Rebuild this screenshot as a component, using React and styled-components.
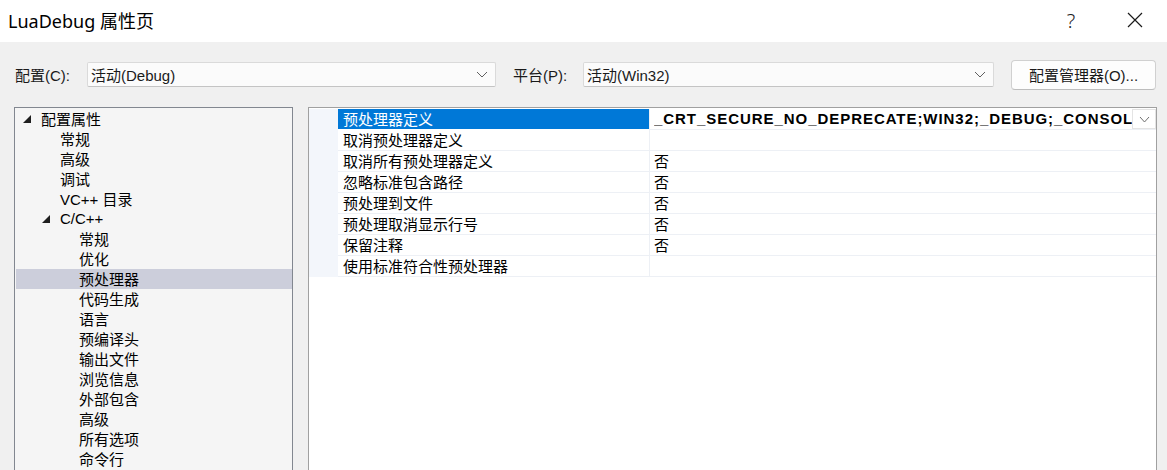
import React from "react";
import styled, { createGlobalStyle } from "styled-components";

const Global = createGlobalStyle`
  html, body { margin: 0; padding: 0; background: #f0f0f0; }
  body { font-family: "Liberation Sans", "Noto Sans CJK SC", sans-serif; color: #000; }
  * { box-sizing: border-box; }
`;

const Window = styled.div`
  width: 1167px;
  height: 470px;
  overflow: hidden;
  background: #f0f0f0;
  display: flex;
  flex-direction: column;
`;

const TitleBar = styled.div`
  height: 42px;
  flex: none;
  background: #fff;
  display: flex;
  align-items: center;
  padding-left: 8px;
`;

const Title = styled.div`
  flex: 1;
  font-family: "Noto Sans", "Noto Sans CJK SC", sans-serif;
  font-size: 18px;
  color: #000;
  margin-top: -3px;
`;

const TitleButton = styled.div`
  width: 64px;
  height: 42px;
  display: flex;
  align-items: center;
  justify-content: center;
  font-family: "Noto Sans", sans-serif;
  font-weight: 300;
  font-size: 20px;
  color: #222;
  margin-top: -2px;
`;

const Toolbar = styled.div`
  height: 65px;
  flex: none;
  display: flex;
  align-items: center;
  padding-left: 15px;
`;

const Label = styled.span`
  width: ${(p) => p.$w}px;
  margin-left: ${(p) => p.$ml || 0}px;
  font-family: "Liberation Sans", "Noto Sans CJK SC", sans-serif;
  font-size: 15px;
  color: #1a1a1a;
  flex: none;
`;

const Select = styled.div`
  width: ${(p) => p.$w}px;
  height: 25px;
  flex: none;
  background: #fbfbfb;
  border: 1px solid #dadada;
  border-bottom-color: #c4c4c4;
  border-radius: 2px;
  display: flex;
  align-items: center;
  padding-left: 3px;
  padding-right: 7px;
  font-family: "Liberation Sans", "Noto Sans CJK SC", sans-serif;
  font-size: 15px;
  color: #1a1a1a;
`;

const SelectText = styled.span`
  flex: 1;
`;

const Button = styled.div`
  margin-left: 17px;
  width: 145px;
  height: 30px;
  flex: none;
  background: #fdfdfd;
  border: 1px solid #d0d0d0;
  border-bottom-color: #bdbdbd;
  border-radius: 4px;
  display: flex;
  align-items: center;
  justify-content: center;
  font-family: "Liberation Sans", "Noto Sans CJK SC", sans-serif;
  font-size: 15px;
  color: #1a1a1a;
`;

const Body = styled.div`
  flex: 1;
  display: flex;
  padding-left: 14px;
  gap: 15px;
  min-height: 0;
`;

const TreePanel = styled.div`
  width: 279px;
  height: 400px;
  flex: none;
  border: 1px solid #828790;
  background: #f5f5f5;
  padding-top: 1px;
`;

const TreeRow = styled.div`
  height: 20px;
  display: flex;
  align-items: center;
  padding-left: ${(p) => 8 + p.$level * 19}px;
  padding-bottom: 2px;
  margin-left: ${(p) => (p.$selected ? 1 : 0)}px;
  background: ${(p) => (p.$selected ? "#cccedb" : "transparent")};
  font-family: "Liberation Sans", "Noto Sans CJK SC", sans-serif;
  font-size: 15px;
  color: #000;
  white-space: nowrap;
`;

const Expander = styled.span`
  width: ${(p) => (p.$selected ? 17 : 18)}px;
  flex: none;
  display: flex;
  align-items: center;
  padding-top: 2px;
`;

const GridPanel = styled.div`
  width: 849px;
  height: 400px;
  flex: none;
  border: 1px solid #a0a0a0;
  background: #fff;
  padding-top: 1px;
`;

const GridRow = styled.div`
  display: flex;
  height: 21px;
`;

const Strip = styled.div`
  width: 29px;
  flex: none;
  background: #f3f6fb;
`;

const NameCell = styled.div`
  width: 311px;
  flex: none;
  height: 21px;
  padding-left: 5px;
  display: flex;
  align-items: center;
  border-bottom: 1px solid ${(p) => (p.$selected ? "#fff" : "#edf0f5")};
  background: ${(p) => (p.$selected ? "#0078d7" : "#fff")};
  color: ${(p) => (p.$selected ? "#fff" : "#000")};
  font-family: "Liberation Sans", "Noto Sans CJK SC", sans-serif;
  font-size: 15px;
  white-space: nowrap;
  padding-bottom: 2px;
`;

const ValueCell = styled.div`
  flex: 1;
  min-width: 0;
  height: 21px;
  display: flex;
  align-items: center;
  padding-left: 4px;
  border-left: 1px solid #edf0f5;
  border-bottom: 1px solid #edf0f5;
  font-family: "Liberation Sans", "Noto Sans CJK SC", sans-serif;
  font-size: 15px;
  font-weight: ${(p) => (p.$bold ? 700 : 400)};
  letter-spacing: ${(p) => (p.$bold ? "0.95px" : "0")};
  color: #000;
  white-space: nowrap;
  overflow: hidden;
  padding-bottom: 2px;
`;

const ValueText = styled.span`
  flex: 1;
  min-width: 0;
  overflow: hidden;
  white-space: nowrap;
`;

const DropButton = styled.div`
  width: 24px;
  height: 20px;
  flex: none;
  margin-top: 2px;
  background: #fff;
  border: 1px solid #e4e4e4;
  display: flex;
  align-items: center;
  justify-content: center;
`;

const Chevron = ({ w = 10, h = 5, color = "#606060" }) => (
  <svg width={w + 2} height={h + 2} viewBox={`-1 -1 ${w + 2} ${h + 2}`}>
    <polyline points={`0,0 ${w / 2},${h} ${w},0`} fill="none" stroke={color} strokeWidth="1" />
  </svg>
);

const Triangle = () => (
  <svg width="8" height="8" viewBox="0 0 8 8">
    <polygon points="8,0 8,8 0,8" fill="#1e1e1e" />
  </svg>
);

const CloseIcon = () => (
  <svg width="16" height="16" viewBox="0 0 16 16">
    <path d="M1 1 L15 15 M15 1 L1 15" stroke="#1a1a1a" strokeWidth="1.2" fill="none" />
  </svg>
);

const tree = [
  { t: "配置属性", l: 0, exp: true },
  { t: "常规", l: 1 },
  { t: "高级", l: 1 },
  { t: "调试", l: 1 },
  { t: "VC++ 目录", l: 1 },
  { t: "C/C++", l: 1, exp: true },
  { t: "常规", l: 2 },
  { t: "优化", l: 2 },
  { t: "预处理器", l: 2, sel: true },
  { t: "代码生成", l: 2 },
  { t: "语言", l: 2 },
  { t: "预编译头", l: 2 },
  { t: "输出文件", l: 2 },
  { t: "浏览信息", l: 2 },
  { t: "外部包含", l: 2 },
  { t: "高级", l: 2 },
  { t: "所有选项", l: 2 },
  { t: "命令行", l: 2 },
];

const props = [
  { n: "预处理器定义", v: "_CRT_SECURE_NO_DEPRECATE;WIN32;_DEBUG;_CONSOLE;%(PreprocessorDefinitions)", sel: true },
  { n: "取消预处理器定义", v: "" },
  { n: "取消所有预处理器定义", v: "否" },
  { n: "忽略标准包含路径", v: "否" },
  { n: "预处理到文件", v: "否" },
  { n: "预处理取消显示行号", v: "否" },
  { n: "保留注释", v: "否" },
  { n: "使用标准符合性预处理器", v: "" },
];

export default function App() {
  return (
    <>
      <Global />
      <Window>
        <TitleBar>
          <Title>LuaDebug 属性页</Title>
          <TitleButton>?</TitleButton>
          <TitleButton>
            <CloseIcon />
          </TitleButton>
        </TitleBar>
        <Toolbar>
          <Label $w={72}>配置(C):</Label>
          <Select $w={409}>
            <SelectText>活动(Debug)</SelectText>
            <Chevron />
          </Select>
          <Label $w={70} $ml={17}>平台(P):</Label>
          <Select $w={411}>
            <SelectText>活动(Win32)</SelectText>
            <Chevron />
          </Select>
          <Button>配置管理器(O)...</Button>
        </Toolbar>
        <Body>
          <TreePanel>
            {tree.map((it, i) => (
              <TreeRow key={i} $level={it.l} $selected={it.sel}>
                <Expander $selected={it.sel}>{it.exp && <Triangle />}</Expander>
                {it.t}
              </TreeRow>
            ))}
          </TreePanel>
          <GridPanel>
            {props.map((p, i) => (
              <GridRow key={i}>
                <Strip />
                <NameCell $selected={p.sel}>{p.n}</NameCell>
                <ValueCell $bold={p.sel}>
                  <ValueText>{p.v}</ValueText>
                  {p.sel && (
                    <DropButton>
                      <Chevron w={9} h={5} color="#707070" />
                    </DropButton>
                  )}
                </ValueCell>
              </GridRow>
            ))}
          </GridPanel>
        </Body>
      </Window>
    </>
  );
}
